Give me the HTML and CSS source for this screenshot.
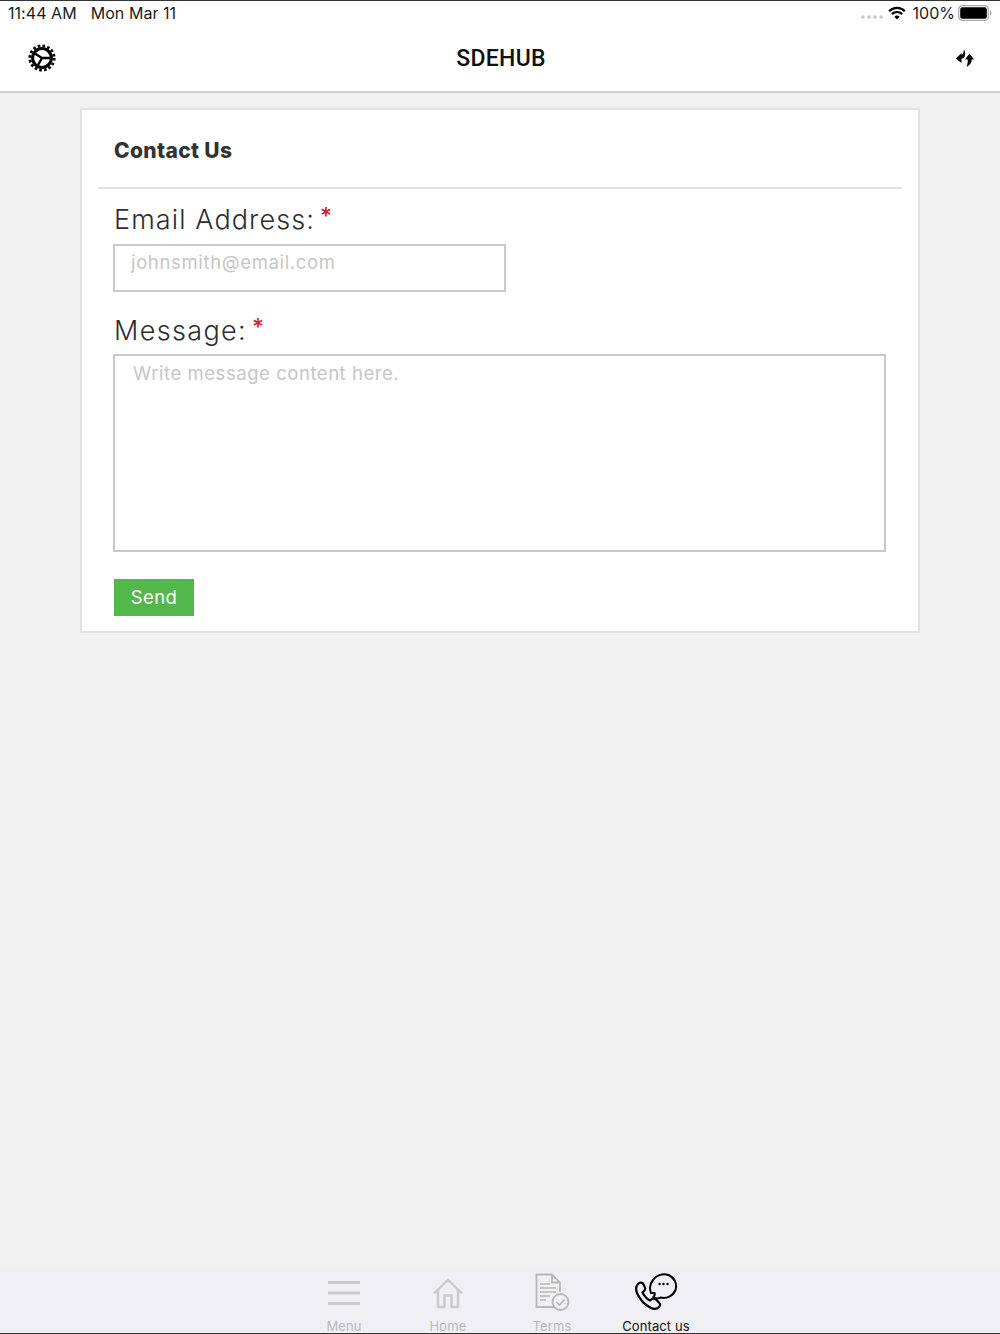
FILE: index.html
```html
<!DOCTYPE html>
<html lang="en">
<head>
<meta charset="utf-8">
<title>SDEHUB</title>
<link rel="stylesheet" href="styles.css">
</head>
<body>
<div class="app">
  <header class="top">
    <div class="status">
      <div class="status-left"><span>11:44 AM</span><span>Mon Mar 11</span></div>
      <div class="status-right">
        <svg class="dots" width="22" height="4" viewBox="0 0 22 4"><g fill="#c4c4c4"><circle cx="2" cy="2" r="1.7"/><circle cx="8" cy="2" r="1.7"/><circle cx="14" cy="2" r="1.7"/><circle cx="20" cy="2" r="1.7"/></g></svg>
        <svg class="wifi" width="18" height="14" viewBox="0 0 18 14"><path d="M9 13.5 6.4 10.7a3.7 3.7 0 0 1 5.2 0z" fill="#000"/><path d="M3.9 8.1a7.2 7.2 0 0 1 10.2 0M1.2 5.2a11 11 0 0 1 15.6 0" fill="none" stroke="#000" stroke-width="2.2"/></svg>
        <span class="pct">100%</span>
        <svg class="batt" width="34" height="16" viewBox="0 0 34 16"><rect x=".7" y=".7" width="29.6" height="14.6" rx="3.6" fill="none" stroke="#a8a8a8" stroke-width="1.2"/><rect x="2.2" y="2.2" width="26.6" height="11.6" rx="2.2" fill="#000"/><path d="M32 5.5c1 .3 1.5 1.2 1.5 2.5s-.5 2.2-1.5 2.5z" fill="#a8a8a8"/></svg>
      </div>
    </div>
    <nav class="navbar">
      <svg class="gear" width="28" height="28" viewBox="0 0 28 28">
        <circle cx="14" cy="14" r="12.2" fill="none" stroke="#000" stroke-width="2.8" stroke-dasharray="2.6 2.2"/>
        <circle cx="14" cy="14" r="9.4" fill="none" stroke="#000" stroke-width="3"/>
        <path d="M14 14 6 9M14 14h9M14 14l-4.500 8" stroke="#000" stroke-width="2.400" fill="none"/>
      </svg>
      <h1 class="brand">SDEHUB</h1>
      <svg class="sync" width="18" height="18" viewBox="0 0 18 18"><path d="M0 9.500 5.500 4V6.500C7 5 7.800 3 8 .5 10 3.500 9.500 7.500 7 9.500H5.500V14z" fill="#000"/><path d="M13.500 4.500 18 10.500H15.800C15.800 13.500 13.800 16.500 10.500 18 11.500 15.500 11.800 13 11.800 10.500H9z" fill="#000"/></svg>
    </nav>
  </header>

  <main class="content">
    <section class="card">
      <h2 class="card-title">Contact Us</h2>
      <form class="form">
        <div class="field">
          <label class="label" for="email"><span>Email Address:</span><span class="req">*</span></label>
          <input class="input" id="email" type="email" placeholder="johnsmith@email.com">
        </div>
        <div class="field field-msg">
          <label class="label" for="msg"><span>Message:</span><span class="req">*</span></label>
          <textarea class="textarea" id="msg" placeholder="Write message content here."></textarea>
        </div>
        <button class="send" type="button">Send</button>
      </form>
    </section>
  </main>

  <footer class="tabs">
    <div class="tab">
      <svg class="ic-menu" width="36" height="28" viewBox="0 0 36 28"><path d="M2 3.500h32M2 14h32M2 24.500h32" stroke="#cbcbcb" stroke-width="3" fill="none"/></svg>
      <span>Menu</span>
    </div>
    <div class="tab">
      <svg class="ic-home" width="36" height="36" viewBox="0 0 36 36"><path d="M4 17.500 18 4l14 13.500M8 14v17h6.500V19.500h7V31H28V14" fill="none" stroke="#cbcbcb" stroke-width="2.400"/></svg>
      <span>Home</span>
    </div>
    <div class="tab">
      <svg class="ic-terms" width="36" height="40" viewBox="0 0 36 40" fill="none" stroke="#b8b8b8"><path d="M20 34H2.500V1.500H18L26 9.500V19M18 1.500v8h8" stroke-width="1.800"/><path d="M6 11h10M6 15h16M6 19h16M6 23h10M6 27h6" stroke-width="1.600"/><circle cx="26.500" cy="29" r="8" fill="#efeff4" stroke-width="1.800"/><path d="m22.500 29 3 3 5-5.500" stroke-width="1.600"/></svg>
      <span>Terms</span>
    </div>
    <div class="tab active">
      <svg class="ic-contact" width="44" height="40" viewBox="0 0 44 40" fill="none" stroke="#000"><path d="M9 11.500c-2-1.500-3.500-1-5 .5-2.500 2.500-2.500 5-1 9 3 7 8 12 14 15 3 1.500 6 1 8-1 1.500-1.500 1.500-3 0-4.500l-3-3c-1.500-1.500-3-1.500-4.500 0l-1.500 1c-3-1.500-6-5-7.500-8l1.500-1.500c1.500-1.500 1.500-3 .5-4.500z" stroke-width="2.200"/><path d="M17 21.500c-2-5-.5-10 2-13 3.500-5 10-7 15.500-5 6 2.500 9 9 7 15-2.500 6-9 9-15 7.500-2.500 1.500-5 1-7-.5 1-1 1.500-2.500 1-4z" stroke-width="2" transform="translate(0 -.500)"/><g fill="#000" stroke="none"><circle cx="25.500" cy="12" r="1.200"/><circle cx="29.500" cy="12" r="1.200"/><circle cx="33.500" cy="12" r="1.200"/></g></svg>
      <span>Contact us</span>
    </div>
  </footer>
</div>
</body>
</html>
```

FILE: styles.css
```css
* { box-sizing: border-box; }
html, body { margin: 0; padding: 0; }
body { font-family: "Inter", "Liberation Sans", sans-serif; background: #f1f1f2; }
.app { width: 1000px; height: 1334px; display: flex; flex-direction: column; border-top: 1px solid #333; border-bottom: 1px solid #333; overflow: hidden; }

.top { background: #fff; height: 92px; border-bottom: 2px solid #cfcfcf; flex: none; }
.status { height: 25px; display: flex; justify-content: space-between; align-items: center; padding: 0 8px 1px; font-size: 16px; color: #1b1b1b; }
.status-left { display: flex; gap: 14px; letter-spacing: .05px; }
.status-right { display: flex; align-items: center; }
.dots { margin-right: 5px; margin-top: 7px; }
.wifi { margin-right: 7px; }
.pct { margin-right: 3px; }
.navbar { height: 64px; padding: 0 26px 0 28px; display: grid; grid-template-columns: 1fr auto 1fr; align-items: center; }
.gear { justify-self: start; }
.sync { justify-self: end; }
.brand { margin: 0; font-size: 23px; font-weight: 500; color: #111; font-family: "Roboto", sans-serif; letter-spacing: .3px; }

.content { flex: 1; padding: 15px 80px; }
.card { background: #fff; border: 2px solid #e2e2e2; height: 525px; padding: 0 16px; }
.card-title { margin: 0; height: 79px; padding: 24px 16px 0; border-bottom: 2px solid #e2e2e2; font-size: 21px; line-height: 34px; font-weight: 800; color: #333; letter-spacing: .35px; }
.form { padding: 0 15px; }
.field { display: flex; flex-direction: column; }
.field-msg { margin-top: 18px; }
.label { display: block; height: 55px; padding: 13px 0 0 1px; font-size: 27px; line-height: 36px; font-weight: 300; color: #2e2e2e; letter-spacing: 1.1px; }
.field-msg .label { height: 44px; padding-top: 3px; letter-spacing: 1.35px; }
.req { color: #d2232a; font-weight: 500; font-size: 23px; letter-spacing: 0; margin-left: 5px; position: relative; top: -5px; }
.input, .textarea { border: 2px solid #c9c9c9; border-radius: 0; background: #fff; margin: 0; font-family: "Inter", sans-serif; font-size: 18.500px; font-weight: 400; color: #333; outline: none; display: block; letter-spacing: .55px; }
.input { width: 393px; height: 48px; padding: 0 15px 12px 16px; letter-spacing: .65px; }
.textarea { width: 773px; height: 198px; padding: 5px 18px; resize: none; line-height: 24px; }
.input::placeholder, .textarea::placeholder { color: #c6c6c6; opacity: 1; }
.send { margin-top: 27px; margin-left: 1px; width: 80px; height: 37px; border: 0; background: #52b84c; color: #fff; font-family: "Inter", sans-serif; font-size: 18.500px; font-weight: 400; letter-spacing: .4px; padding: 0 0 2px; display: block; }

.tabs { flex: none; height: 63px; background: #efeff4; display: flex; justify-content: center; }
.tab { width: 104px; display: flex; flex-direction: column; align-items: center; justify-content: flex-end; font-size: 13px; color: #b9b9bb; position: relative; letter-spacing: .1px; }
.tab svg { position: absolute; left: 50%; transform: translateX(-50%); }
.ic-menu { top: 9px; }
.ic-home { top: 6px; }
.ic-terms { top: 3px; }
.ic-contact { top: 2px; }
.tab span { line-height: 16px; margin-bottom: -1px; }
.tab.active { color: #111; }
```
